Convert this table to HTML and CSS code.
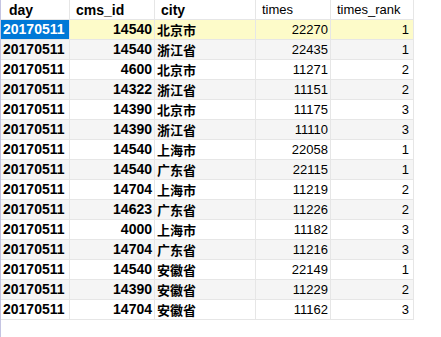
FILE: index.html
```html
<!DOCTYPE html>
<html>
<head>
<meta charset="utf-8">
<link rel="stylesheet" href="styles.css">
</head>
<body>
<div class="grid">
  <div class="row head">
    <div class="c b">day</div><div class="c b">cms_id</div><div class="c b">city</div><div class="c">times</div><div class="c">times_rank</div>
  </div>
  <div class="row cur">
    <div class="c b sel">20170511</div><div class="c b r">14540</div><div class="c b zh">北京市</div><div class="c r">22270</div><div class="c r rk">1</div>
  </div>
  <div class="row alt">
    <div class="c b">20170511</div><div class="c b r">14540</div><div class="c b zh">浙江省</div><div class="c r">22435</div><div class="c r rk">1</div>
  </div>
  <div class="row">
    <div class="c b">20170511</div><div class="c b r">4600</div><div class="c b zh">北京市</div><div class="c r">11271</div><div class="c r rk">2</div>
  </div>
  <div class="row alt">
    <div class="c b">20170511</div><div class="c b r">14322</div><div class="c b zh">浙江省</div><div class="c r">11151</div><div class="c r rk">2</div>
  </div>
  <div class="row">
    <div class="c b">20170511</div><div class="c b r">14390</div><div class="c b zh">北京市</div><div class="c r">11175</div><div class="c r rk">3</div>
  </div>
  <div class="row alt">
    <div class="c b">20170511</div><div class="c b r">14390</div><div class="c b zh">浙江省</div><div class="c r">11110</div><div class="c r rk">3</div>
  </div>
  <div class="row">
    <div class="c b">20170511</div><div class="c b r">14540</div><div class="c b zh">上海市</div><div class="c r">22058</div><div class="c r rk">1</div>
  </div>
  <div class="row alt">
    <div class="c b">20170511</div><div class="c b r">14540</div><div class="c b zh">广东省</div><div class="c r">22115</div><div class="c r rk">1</div>
  </div>
  <div class="row">
    <div class="c b">20170511</div><div class="c b r">14704</div><div class="c b zh">上海市</div><div class="c r">11219</div><div class="c r rk">2</div>
  </div>
  <div class="row alt">
    <div class="c b">20170511</div><div class="c b r">14623</div><div class="c b zh">广东省</div><div class="c r">11226</div><div class="c r rk">2</div>
  </div>
  <div class="row">
    <div class="c b">20170511</div><div class="c b r">4000</div><div class="c b zh">上海市</div><div class="c r">11182</div><div class="c r rk">3</div>
  </div>
  <div class="row alt">
    <div class="c b">20170511</div><div class="c b r">14704</div><div class="c b zh">广东省</div><div class="c r">11216</div><div class="c r rk">3</div>
  </div>
  <div class="row">
    <div class="c b">20170511</div><div class="c b r">14540</div><div class="c b zh">安徽省</div><div class="c r">22149</div><div class="c r rk">1</div>
  </div>
  <div class="row alt">
    <div class="c b">20170511</div><div class="c b r">14390</div><div class="c b zh">安徽省</div><div class="c r">11229</div><div class="c r rk">2</div>
  </div>
  <div class="row">
    <div class="c b">20170511</div><div class="c b r">14704</div><div class="c b zh">安徽省</div><div class="c r">11162</div><div class="c r rk">3</div>
  </div>
</div>
</body>
</html>
```

FILE: styles.css
```css
html, body {
  margin: 0;
  padding: 0;
  background: #ffffff;
}
body {
  height: 337px;
  border-left: 1px solid #c4c4e2;
  box-sizing: border-box;
  font-family: "Liberation Sans", "Noto Sans CJK SC", sans-serif;
  font-size: 13px;
  color: #000000;
}
.grid {
  display: flex;
  flex-direction: column;
  width: 413px;
}
.row {
  display: grid;
  grid-template-columns: 69px 85px 101px 75px 83px;
  height: 20px;
  background: #ffffff;
}
.row.alt {
  background: #f5f5f5;
}
.row.cur {
  background: #fdfbc9;
}
.c {
  box-sizing: border-box;
  border-right: 1px solid #e6e6e6;
  border-bottom: 1px solid #e6e6e6;
  line-height: 19px;
  padding: 0 2px;
  white-space: nowrap;
  overflow: hidden;
}
.head .c {
  padding-left: 6px;
  line-height: 20px;
}
.head .c:first-child {
  padding-left: 8px;
}
.b {
  font-weight: bold;
  font-size: 14px;
}
.zh {
  font-family: "Noto Sans CJK SC", sans-serif;
  font-size: 13px;
}
.r {
  text-align: right;
}
.rk {
  padding-right: 4px;
}
.row .c:first-child {
  padding-left: 2px;
}
.head .c:first-child {
  padding-left: 8px;
}
.sel {
  background: #0078d7;
  color: #ffffff;
}
```
